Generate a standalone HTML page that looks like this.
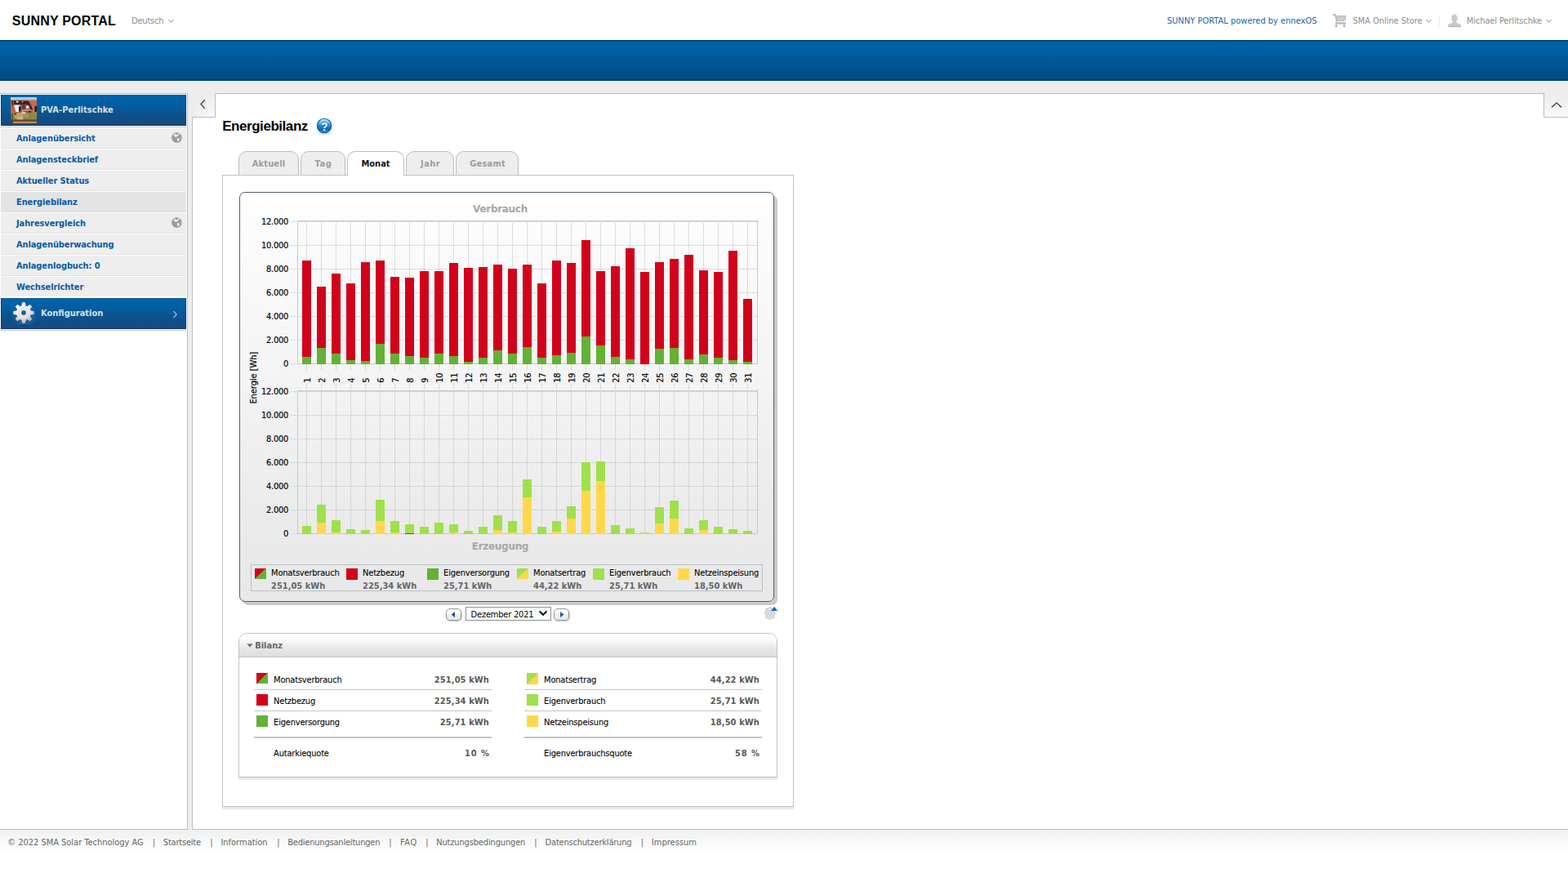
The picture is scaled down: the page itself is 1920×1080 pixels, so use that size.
<!DOCTYPE html>
<html lang="de">
<head>
<meta charset="utf-8">
<title>Sunny Portal - Energiebilanz</title>
<style>
*{box-sizing:border-box;margin:0;padding:0}
html,body{width:1920px;height:1080px;overflow:hidden;background:#fff}
body{position:relative;font-family:"DejaVu Sans Condensed","DejaVu Sans","Liberation Sans",sans-serif;font-size:11px;color:#000}
.abs{position:absolute}
.t{position:absolute;white-space:nowrap;line-height:14px;height:14px}
.b{font-weight:bold}
.geo{font-family:"Liberation Sans",sans-serif;font-weight:bold}
.ver{font-family:"DejaVu Sans","Liberation Sans",sans-serif;font-weight:bold}
a{color:inherit;text-decoration:none}
#hdr{left:0;top:0;width:1920px;height:49px;background:#fff}
#band{left:0;top:49px;width:1920px;height:50px;background:linear-gradient(#00386a 0,#00386a 1px,#0062a7 2px,#005d9f 18px,#00508b 38px,#004b83 48px,#003c70 49px,#003c70 50px)}
#bg{left:0;top:99px;width:1920px;height:917px;background:#ededed}
#side{left:0;top:114px;width:230px;height:902px;background:#fff;border:1px solid #bcbcbc;border-left:0}
#side .hd{left:1px;top:1px;width:227px;height:38px;border:1px solid #0a3d73;border-top-color:#005a9c;background:linear-gradient(#0063a9 0,#005e9f 12px,#0e4f88 26px,#1a4a7c 37px)}
#side .ln{left:1px;width:227px;height:1px}
#side .it{left:1px;width:227px;height:26px;background:#eeeeee;border-top:1px solid #fff;border-bottom:1px solid #e2e2e2}
#side .it.sel{background:#e4e4e4;border-bottom-color:#dcdcdc}
#side .it a{position:absolute;left:19px;top:6px;line-height:14px;font-weight:bold;color:#075aa5;white-space:nowrap;letter-spacing:-.1px}
#side .cfg{left:1px;top:251px;width:227px;height:38px;border:1px solid #0a3d73;border-top-color:#005a9c;background:linear-gradient(#0063a9 0,#005e9f 12px,#0e4f88 26px,#1a4a7c 37px)}
#main{left:235px;top:114px;width:1685px;height:902px;background:#fff}
</style>
</head>
<body>
<div id="hdr" class="abs">
 <span class="t geo" id="logo" style="left:14.8px;top:17px;font-size:16px;line-height:18px;height:18px;letter-spacing:.2px;color:#000">SUNNY PORTAL</span>
 <span class="t" id="lang" style="top:19px;left:161px;color:#8c8c8c;letter-spacing:-.2px">Deutsch</span>
 <svg class="abs" style="left:205px;top:23px" width="9" height="6" viewBox="0 0 9 6"><path d="M1.3 1 L4.5 4.2 L7.7 1" fill="none" stroke="#b0b0b0" stroke-width="1.1"/></svg>
 <a class="t" id="ennex" style="top:19px;left:1429px;color:#1a63a9">SUNNY PORTAL powered by ennexOS</a>
 <svg class="abs" id="cart" style="left:1631px;top:16px" width="19" height="18" viewBox="0 0 19 18"><path d="M1 1.1H4.3L4.9 3H17V7.5L14.7 9.9H6.2L5.6 11.3H17V13.7H4.2L4.4 11.6L5 9.9L3.3 3H1Z" fill="#b9b9b9"/><path d="M5.6 3.9H16.1V7.2L14.3 9H6.6Z" fill="#cccccc"/><circle cx="5.2" cy="15.8" r="1.45" fill="#adadad"/><circle cx="15" cy="15.8" r="1.45" fill="#adadad"/></svg>
 <span class="t" id="store" style="top:19px;left:1656.6px;color:#8c8c8c;letter-spacing:-.06px">SMA Online Store</span>
 <svg class="abs" style="left:1745px;top:23px" width="9" height="6" viewBox="0 0 9 6"><path d="M1.3 1 L4.5 4.2 L7.7 1" fill="none" stroke="#b0b0b0" stroke-width="1.1"/></svg>
 <div class="abs" style="left:1762px;top:20px;width:1px;height:11px;background:repeating-linear-gradient(#d9d9d9 0,#d9d9d9 1px,transparent 1px,transparent 2px)"></div>
 <svg class="abs" id="user" style="left:1772px;top:17px" width="18" height="17" viewBox="0 0 18 17"><path d="M9 1.1 C11.2 1.1 12.2 2.4 12.2 4.4 L12.4 5.6 C12.4 7.2 11.8 8.6 10.9 9.4 L10.9 10.6 C11.6 11.4 13 11.9 14.6 12.3 C16 12.7 16.8 13.4 16.8 14.6 L16.8 16 L1.2 16 L1.2 14.6 C1.2 13.4 2 12.7 3.4 12.3 C5 11.9 6.4 11.4 7.1 10.6 L7.1 9.4 C6.2 8.6 5.6 7.2 5.6 5.6 L5.8 4.4 C5.8 2.4 6.8 1.1 9 1.1 Z" fill="#c9c9c9" stroke="#bdbdbd" stroke-width=".5"/><rect x="1.3" y="15.1" width="15.4" height=".9" fill="#b5b5b5"/></svg>
 <span class="t" id="usern" style="top:19px;left:1795.8px;color:#8c8c8c;letter-spacing:-.12px">Michael Perlitschke</span>
 <svg class="abs" style="left:1892px;top:23px" width="9" height="6" viewBox="0 0 9 6"><path d="M1.3 1 L4.5 4.2 L7.7 1" fill="none" stroke="#b0b0b0" stroke-width="1.1"/></svg>
</div>
<div id="band" class="abs"></div>
<div id="bg" class="abs"></div>
<div id="side" class="abs">
 <div class="abs hd">
  <svg class="abs" id="thumb" style="left:11px;top:2px" width="32" height="32" viewBox="0 0 32 32">
   <defs><filter id="bl" x="-20%" y="-20%" width="140%" height="140%"><feGaussianBlur stdDeviation="0.5"/></filter><clipPath id="tc"><rect width="32" height="32"/></clipPath></defs>
   <g clip-path="url(#tc)"><g filter="url(#bl)">
    <rect x="-4" y="-4" width="40" height="40" fill="#b85e46"/>
    <rect x="-4" y="-4" width="40" height="7.2" fill="#9fd0f3"/>
    <rect x="-4" y="-4" width="7" height="6" fill="#b4d6ee"/>
    <rect x="-4" y="3" width="40" height="1.5" fill="#b39a95"/>
    <polygon points="22,4.5 36,4.5 36,11 27,11" fill="#c9684a"/>
    <polygon points="25,11 36,11 36,20 28,20" fill="#cb7363"/>
    <polygon points="-4,4 3.5,4 4,18 -4,18" fill="#c6613c"/>
    <polygon points="1,4 2.6,4 3.2,10.5 1.8,10.5" fill="#57231f"/>
    <polygon points="3.6,4 22,4.5 27.4,15 24,15 21,9.2 4,9.4" fill="#3a2427"/>
    <rect x="6.8" y="4.6" width="2.6" height="2" fill="#f4ecec"/>
    <rect x="13.6" y="4.9" width="2" height="1.2" fill="#d2aaa2"/>
    <rect x="13.4" y="6.4" width="2.8" height="3.2" fill="#293048"/>
    <polygon points="4,9.5 12,9.5 13,18 6.4,18" fill="#ece9e1"/>
    <ellipse cx="11.4" cy="14.6" rx="1.5" ry="4" fill="#2a1c2c"/>
    <polygon points="13,10 21,9.6 25,16 14,17" fill="#b25c4a"/>
    <rect x="14" y="10" width="4" height="4.6" fill="#6b3029"/>
    <rect x="19" y="10.6" width="3.6" height="3" fill="#f7f1ef"/>
    <rect x="14" y="15" width="11" height="2.6" fill="#c98b79"/>
    <rect x="16.6" y="17" width="7.6" height="2" fill="#6c5c52"/>
    <rect x="22" y="16.8" width="2.6" height="2.4" fill="#2a1614"/>
    <rect x="29.4" y="11" width="4" height="7" fill="#2a1a18"/>
    <rect x="-4" y="18.6" width="40" height="12" fill="#8b8548"/>
    <rect x="-4" y="20" width="7" height="10" fill="#5c6b3a"/>
    <ellipse cx="10.5" cy="23.5" rx="5.8" ry="4.4" fill="#b9a568"/>
    <ellipse cx="12" cy="26" rx="3.4" ry="2" fill="#cdb884"/>
    <ellipse cx="18.5" cy="22.4" rx="3.6" ry="2.6" fill="#b38b69"/>
    <ellipse cx="16" cy="19.2" rx="3" ry="1" fill="#e6dccc"/>
    <ellipse cx="26.4" cy="24.6" rx="4" ry="4.6" fill="#878a41"/>
    <rect x="30.4" y="19.6" width="4" height="6" fill="#c07a52"/>
    <rect x="5" y="19.6" width="2" height="2" fill="#4b4121"/>
    <rect x="-4" y="27.4" width="40" height="2.6" fill="#5e4c32"/>
    <rect x="-4" y="29.8" width="40" height="6" fill="#c6875e"/>
    <rect x="-4" y="28" width="7" height="8" fill="#5b3540"/>
   </g></g>
  </svg>
  <span class="t b" id="pva" style="left:48px;top:11px;color:#d6e1ec;letter-spacing:.05px">PVA-Perlitschke</span>
 </div>
 <div class="abs ln" style="top:40px;background:#c9c6c2"></div>
 <div class="abs it" style="top:41px"><a>Anlagenübersicht</a><svg class="abs globe" style="left:209px;top:5px" width="13" height="13" viewBox="0 0 13 13"><circle cx="6.5" cy="6.5" r="6.3" fill="#9a9a9a"/><path d="M2.6 2.9 C3.4 2.1 4.4 1.9 5.2 2.3 L5.6 3 L7.6 3 L8 2.2 L8.2 1.3 L9.4 1.6 L10.2 2.8 L8.6 3.2 L6.8 5.2 L5 6 L3.6 5 Z M6.9 7.2 L8.4 6.9 L10.1 8.6 L9 10.2 L7.6 11.6 L7 10 Z M11.1 5.8 L11.9 6.1 L11.8 7.4 L11.1 7 Z" fill="#f2f2f2"/></svg></div>
 <div class="abs it" style="top:67px"><a>Anlagensteckbrief</a></div>
 <div class="abs it" style="top:93px"><a>Aktueller Status</a></div>
 <div class="abs it sel" style="top:119px"><a>Energiebilanz</a></div>
 <div class="abs it" style="top:145px"><a>Jahresvergleich</a><svg class="abs globe" style="left:209px;top:5px" width="13" height="13" viewBox="0 0 13 13"><circle cx="6.5" cy="6.5" r="6.3" fill="#9a9a9a"/><path d="M2.6 2.9 C3.4 2.1 4.4 1.9 5.2 2.3 L5.6 3 L7.6 3 L8 2.2 L8.2 1.3 L9.4 1.6 L10.2 2.8 L8.6 3.2 L6.8 5.2 L5 6 L3.6 5 Z M6.9 7.2 L8.4 6.9 L10.1 8.6 L9 10.2 L7.6 11.6 L7 10 Z M11.1 5.8 L11.9 6.1 L11.8 7.4 L11.1 7 Z" fill="#f2f2f2"/></svg></div>
 <div class="abs it" style="top:171px"><a>Anlagenüberwachung</a></div>
 <div class="abs it" style="top:197px"><a>Anlagenlogbuch: 0</a></div>
 <div class="abs it" style="top:223px;border-bottom-color:#fff"><a>Wechselrichter</a></div>
 <div class="abs cfg" style="top:250px">
  <svg class="abs" id="gear" style="left:10px;top:0px" width="34" height="36" viewBox="-17 -17 34 36">
   <defs><radialGradient id="gg" gradientUnits="userSpaceOnUse" cx="-2" cy="-4" r="16"><stop offset="0" stop-color="#ffffff"/><stop offset="0.55" stop-color="#ededed"/><stop offset="1" stop-color="#bdbdbd"/></radialGradient><radialGradient id="gl"><stop offset="0" stop-color="#5f93cc" stop-opacity=".5"/><stop offset=".6" stop-color="#4f86c2" stop-opacity=".3"/><stop offset="1" stop-color="#4f86c2" stop-opacity="0"/></radialGradient><filter id="gb" x="-50%" y="-200%" width="200%" height="500%"><feGaussianBlur stdDeviation=".6"/></filter></defs>
   <ellipse cx="1" cy="3" rx="16" ry="15" fill="url(#gl)"/>
   <ellipse cx="0" cy="15.7" rx="5.6" ry=".7" fill="#0a2a52" opacity=".6" filter="url(#gb)"/>
   <path d="M-2.23 -8.31 L-1.40 -12.32 L1.40 -12.32 L2.23 -8.31ZM4.30 -7.45 L7.72 -9.70 L9.70 -7.72 L7.45 -4.30ZM8.31 -2.23 L12.32 -1.40 L12.32 1.40 L8.31 2.23ZM7.45 4.30 L9.70 7.72 L7.72 9.70 L4.30 7.45ZM2.23 8.31 L1.40 12.32 L-1.40 12.32 L-2.23 8.31ZM-4.30 7.45 L-7.72 9.70 L-9.70 7.72 L-7.45 4.30ZM-8.31 2.23 L-12.32 1.40 L-12.32 -1.40 L-8.31 -2.23ZM-7.45 -4.30 L-9.70 -7.72 L-7.72 -9.70 L-4.30 -7.45Z" fill="url(#gg)" stroke="url(#gg)" stroke-width="1" stroke-linejoin="round"/>
   <circle r="9.1" fill="url(#gg)"/>
   <circle r="6.6" fill="none" stroke="#dcdcdc" stroke-width=".8"/><circle r="5" fill="none" stroke="#e2e2e2" stroke-width="1.2"/>
   <circle r="3.45" fill="#1a5e9c" stroke="#f6f6f6" stroke-width=".9"/>
  </svg>
  <span class="t b" id="konf" style="left:48px;top:11px;color:#d6e1ec">Konfiguration</span>
  <svg class="abs" style="left:209px;top:14px" width="7" height="10" viewBox="0 0 7 10"><path d="M1.5 1 L5.2 5 L1.5 9" fill="none" stroke="#9cbfe2" stroke-width="1.2"/></svg>
 </div>
 <div class="abs ln" style="top:289px;background:#c9c6c2"></div>
</div>
<div id="main" class="abs" style="border:1px solid #bcbcbc;border-right:0"></div>
<div class="abs" id="notchL" style="left:235px;top:114px;width:29px;height:30px;border-right:1px solid #bcbcbc;border-bottom:1px solid #bcbcbc;background:radial-gradient(circle at 100% 100%,#fcfcfc 0,#f3f3f3 35%,#ededed 70%)">
 <svg class="abs" style="left:9px;top:7.3px" width="9" height="13" viewBox="0 0 9 13"><path d="M6.8 1 L2 6.5 L6.8 12" fill="none" stroke="#555" stroke-width="1.5"/></svg>
</div>
<div class="abs" id="notchR" style="left:1890px;top:114px;width:30px;height:30px;border-left:1px solid #bcbcbc;border-bottom:1px solid #bcbcbc;background:linear-gradient(#ededed 0,#efefef 35%,#f5f5f5 70%,#fbfbfb 100%)">
 <svg class="abs" style="left:8px;top:10px" width="14" height="9" viewBox="0 0 14 9"><path d="M1 7.4 L7 2 L13 7.4" fill="none" stroke="#555" stroke-width="1.6"/></svg>
</div>
<h1 class="t geo" id="title" style="left:272.2px;top:145px;font-size:17px;line-height:20px;height:20px;letter-spacing:-.45px">Energiebilanz</h1>
<svg class="abs" id="help" style="left:386px;top:143px" width="22" height="23" viewBox="-11 -11 22 23">
 <defs><linearGradient id="hg" x1="0" y1="0" x2="0" y2="1"><stop offset="0" stop-color="#c4ecfc"/><stop offset=".22" stop-color="#74c2ee"/><stop offset=".5" stop-color="#1784d2"/><stop offset=".82" stop-color="#0769bf"/><stop offset="1" stop-color="#4b98dc"/></linearGradient><filter id="hb" x="-30%" y="-30%" width="160%" height="160%"><feGaussianBlur stdDeviation=".8"/></filter></defs>
 <ellipse cx=".2" cy="8.2" rx="8" ry="2.6" fill="#7d8794" opacity=".35" filter="url(#hb)"/>
 <circle cx=".1" cy="-.05" r="9.3" fill="#0f5db1"/>
 <circle cx=".1" cy="-.05" r="8.1" fill="url(#hg)"/>
 <text x=".3" y="5.75" text-anchor="middle" font-family="Liberation Sans, sans-serif" font-weight="bold" font-size="15.4" fill="#3a4a5c" opacity=".7" transform="translate(0 -.7) scale(.86 1)">?</text>
 <text x=".3" y="5.75" text-anchor="middle" font-family="Liberation Sans, sans-serif" font-weight="bold" font-size="15.4" fill="#fff" transform="scale(.86 1)">?</text>
</svg>
<div class="abs tab" style="left:292px;width:74px"><span style="letter-spacing:.12px">Aktuell</span></div>
<div class="abs tab" style="left:368px;width:55px"><span style="letter-spacing:.6px;margin-left:1px">Tag</span></div>
<div class="abs tab" style="left:497px;width:59px"><span style="letter-spacing:.4px;margin-left:1px">Jahr</span></div>
<div class="abs tab" style="left:558px;width:77px"><span style="letter-spacing:.2px;margin-left:1px">Gesamt</span></div>
<div id="panel" class="abs"></div>
<div class="abs tab act" style="left:425px;width:70px"><span>Monat</span></div>
<style>
.tab{top:185px;height:30px;border:1px solid #bcbcbc;border-radius:10px 10px 0 0;background:#eeeeee;text-align:center;font-weight:bold;color:#9c9c9c}
.tab span{display:block;margin-top:8px;line-height:14px}
.tab.act{background:#fff;border-bottom:0;color:#111}
#panel{left:272px;top:214px;width:700px;height:774px;border:1px solid #c2c2c2;background:#fff;box-shadow:0 3px 0 #e9e9e9}
</style>
<div id="chart" class="abs" style="left:293px;top:235px;width:655px;height:502px;border:1px solid #525f6b;border-radius:7px;background:linear-gradient(#ffffff 0,#fbfbfb 12%,#f4f4f4 45%,#ebebeb 78%,#e8e8e8 100%);box-shadow:4px 4px 0 #cacaca"></div>
<svg class="abs" id="plot" style="left:293px;top:235px" width="655" height="502" viewBox="293 235 655 502" font-family="DejaVu Sans Condensed, DejaVu Sans, Liberation Sans, sans-serif" font-size="11">
<text x="612.5" y="259.6" text-anchor="middle" font-family="DejaVu Sans, Liberation Sans, sans-serif" font-weight="bold" font-size="12" fill="#a6a6a6" letter-spacing="-.3">Verbrauch</text>
<text x="612.5" y="672.6" text-anchor="middle" font-family="DejaVu Sans, Liberation Sans, sans-serif" font-weight="bold" font-size="12" fill="#a6a6a6" letter-spacing="-.3">Erzeugung</text>
<g shape-rendering="crispEdges" fill="none"><path d="M356 271.5H364" stroke="#bac0c5" stroke-dasharray="1 1"/><path d="M356 300.5H364" stroke="#bac0c5" stroke-dasharray="1 1"/><path d="M366 300.5H927" stroke="#bac0c5" stroke-dasharray="1 1"/><path d="M356 329.5H364" stroke="#bac0c5" stroke-dasharray="1 1"/><path d="M366 329.5H927" stroke="#bac0c5" stroke-dasharray="1 1"/><path d="M356 358.5H364" stroke="#bac0c5" stroke-dasharray="1 1"/><path d="M366 358.5H927" stroke="#bac0c5" stroke-dasharray="1 1"/><path d="M356 387.5H364" stroke="#bac0c5" stroke-dasharray="1 1"/><path d="M366 387.5H927" stroke="#bac0c5" stroke-dasharray="1 1"/><path d="M356 416.5H364" stroke="#bac0c5" stroke-dasharray="1 1"/><path d="M366 416.5H927" stroke="#bac0c5" stroke-dasharray="1 1"/><path d="M356 445.5H364" stroke="#bac0c5" stroke-dasharray="1 1"/><path d="M375.5 273V445M393.5 273V445M411.5 273V445M429.5 273V445M447.5 273V445M465.5 273V445M483.5 273V445M501.5 273V445M519.5 273V445M537.5 273V445M555.5 273V445M573.5 273V445M591.5 273V445M609.5 273V445M627.5 273V445M645.5 273V445M663.5 273V445M681.5 273V445M699.5 273V445M717.5 273V445M735.5 273V445M753.5 273V445M771.5 273V445M789.5 273V445M807.5 273V445M825.5 273V445M843.5 273V445M861.5 273V445M879.5 273V445M897.5 273V445M915.5 273V445" stroke="#bac0c5" stroke-dasharray="1 1"/><path d="M375.5 446V454M393.5 446V454M411.5 446V454M429.5 446V454M447.5 446V454M465.5 446V454M483.5 446V454M501.5 446V454M519.5 446V454M537.5 446V454M555.5 446V454M573.5 446V454M591.5 446V454M609.5 446V454M627.5 446V454M645.5 446V454M663.5 446V454M681.5 446V454M699.5 446V454M717.5 446V454M735.5 446V454M753.5 446V454M771.5 446V454M789.5 446V454M807.5 446V454M825.5 446V454M843.5 446V454M861.5 446V454M879.5 446V454M897.5 446V454M915.5 446V454" stroke="#bac0c5" stroke-dasharray="1 1"/><path d="M366 271.5H927" stroke="#bac0c5" stroke-dasharray="1 1"/><rect x="364.5" y="270.5" width="563" height="175" fill="none" stroke="#c2c9d0"/></g>
<g shape-rendering="crispEdges" fill="none"><path d="M356 479.5H364" stroke="#bac0c5" stroke-dasharray="1 1"/><path d="M356 508.5H364" stroke="#bac0c5" stroke-dasharray="1 1"/><path d="M366 508.5H927" stroke="#bac0c5" stroke-dasharray="1 1"/><path d="M356 537.5H364" stroke="#bac0c5" stroke-dasharray="1 1"/><path d="M366 537.5H927" stroke="#bac0c5" stroke-dasharray="1 1"/><path d="M356 566.5H364" stroke="#bac0c5" stroke-dasharray="1 1"/><path d="M366 566.5H927" stroke="#bac0c5" stroke-dasharray="1 1"/><path d="M356 595.5H364" stroke="#bac0c5" stroke-dasharray="1 1"/><path d="M366 595.5H927" stroke="#bac0c5" stroke-dasharray="1 1"/><path d="M356 624.5H364" stroke="#bac0c5" stroke-dasharray="1 1"/><path d="M366 624.5H927" stroke="#bac0c5" stroke-dasharray="1 1"/><path d="M356 653.5H364" stroke="#bac0c5" stroke-dasharray="1 1"/><path d="M375.5 481V653M393.5 481V653M411.5 481V653M429.5 481V653M447.5 481V653M465.5 481V653M483.5 481V653M501.5 481V653M519.5 481V653M537.5 481V653M555.5 481V653M573.5 481V653M591.5 481V653M609.5 481V653M627.5 481V653M645.5 481V653M663.5 481V653M681.5 481V653M699.5 481V653M717.5 481V653M735.5 481V653M753.5 481V653M771.5 481V653M789.5 481V653M807.5 481V653M825.5 481V653M843.5 481V653M861.5 481V653M879.5 481V653M897.5 481V653M915.5 481V653" stroke="#bac0c5" stroke-dasharray="1 1"/><path d="M375.5 470V479M393.5 470V479M411.5 470V479M429.5 470V479M447.5 470V479M465.5 470V479M483.5 470V479M501.5 470V479M519.5 470V479M537.5 470V479M555.5 470V479M573.5 470V479M591.5 470V479M609.5 470V479M627.5 470V479M645.5 470V479M663.5 470V479M681.5 470V479M699.5 470V479M717.5 470V479M735.5 470V479M753.5 470V479M771.5 470V479M789.5 470V479M807.5 470V479M825.5 470V479M843.5 470V479M861.5 470V479M879.5 470V479M897.5 470V479M915.5 470V479" stroke="#bac0c5" stroke-dasharray="1 1"/><path d="M366 479.5H927" stroke="#bac0c5" stroke-dasharray="1 1"/><rect x="364.5" y="478.5" width="563" height="175" fill="none" stroke="#c2c9d0"/></g>
<g shape-rendering="crispEdges"><rect x="370" y="319" width="11" height="118" fill="#d1021b"/><rect x="370" y="437" width="11" height="9" fill="#63b135"/><rect x="370" y="644" width="11" height="10" fill="#a0e04b"/><rect x="388" y="351" width="11" height="75" fill="#d1021b"/><rect x="388" y="426" width="11" height="20" fill="#63b135"/><rect x="388" y="618" width="11" height="22" fill="#a0e04b"/><rect x="388" y="640" width="11" height="14" fill="#fed84a"/><rect x="406" y="335" width="11" height="98" fill="#d1021b"/><rect x="406" y="433" width="11" height="13" fill="#63b135"/><rect x="406" y="637" width="11" height="15" fill="#a0e04b"/><rect x="406" y="652" width="11" height="2" fill="#fed84a"/><rect x="424" y="347" width="11" height="94" fill="#d1021b"/><rect x="424" y="441" width="11" height="5" fill="#63b135"/><rect x="424" y="648" width="11" height="6" fill="#a0e04b"/><rect x="442" y="321" width="11" height="121" fill="#d1021b"/><rect x="442" y="442" width="11" height="4" fill="#63b135"/><rect x="442" y="649" width="11" height="5" fill="#a0e04b"/><rect x="460" y="319" width="11" height="102" fill="#d1021b"/><rect x="460" y="421" width="11" height="25" fill="#63b135"/><rect x="460" y="612" width="11" height="26" fill="#a0e04b"/><rect x="460" y="638" width="11" height="16" fill="#fed84a"/><rect x="478" y="339" width="11" height="94" fill="#d1021b"/><rect x="478" y="433" width="11" height="13" fill="#63b135"/><rect x="478" y="638" width="11" height="14" fill="#a0e04b"/><rect x="478" y="652" width="11" height="2" fill="#fed84a"/><rect x="496" y="340" width="11" height="96" fill="#d1021b"/><rect x="496" y="436" width="11" height="10" fill="#63b135"/><rect x="496" y="642" width="11" height="12" fill="#a0e04b"/><rect x="514" y="332" width="11" height="106" fill="#d1021b"/><rect x="514" y="438" width="11" height="8" fill="#63b135"/><rect x="514" y="645" width="11" height="9" fill="#a0e04b"/><rect x="532" y="332" width="11" height="101" fill="#d1021b"/><rect x="532" y="433" width="11" height="13" fill="#63b135"/><rect x="532" y="640" width="11" height="14" fill="#a0e04b"/><rect x="550" y="322" width="11" height="114" fill="#d1021b"/><rect x="550" y="436" width="11" height="10" fill="#63b135"/><rect x="550" y="642" width="11" height="10" fill="#a0e04b"/><rect x="550" y="652" width="11" height="2" fill="#fed84a"/><rect x="568" y="328" width="11" height="115" fill="#d1021b"/><rect x="568" y="443" width="11" height="3" fill="#63b135"/><rect x="568" y="650" width="11" height="4" fill="#a0e04b"/><rect x="586" y="327" width="11" height="111" fill="#d1021b"/><rect x="586" y="438" width="11" height="8" fill="#63b135"/><rect x="586" y="645" width="11" height="9" fill="#a0e04b"/><rect x="604" y="324" width="11" height="105" fill="#d1021b"/><rect x="604" y="429" width="11" height="17" fill="#63b135"/><rect x="604" y="631" width="11" height="18" fill="#a0e04b"/><rect x="604" y="649" width="11" height="5" fill="#fed84a"/><rect x="622" y="329" width="11" height="104" fill="#d1021b"/><rect x="622" y="433" width="11" height="13" fill="#63b135"/><rect x="622" y="638" width="11" height="14" fill="#a0e04b"/><rect x="622" y="652" width="11" height="2" fill="#fed84a"/><rect x="640" y="324" width="11" height="101" fill="#d1021b"/><rect x="640" y="425" width="11" height="21" fill="#63b135"/><rect x="640" y="587" width="11" height="22" fill="#a0e04b"/><rect x="640" y="609" width="11" height="45" fill="#fed84a"/><rect x="658" y="347" width="11" height="91" fill="#d1021b"/><rect x="658" y="438" width="11" height="8" fill="#63b135"/><rect x="658" y="645" width="11" height="9" fill="#a0e04b"/><rect x="676" y="319" width="11" height="116" fill="#d1021b"/><rect x="676" y="435" width="11" height="11" fill="#63b135"/><rect x="676" y="638" width="11" height="13" fill="#a0e04b"/><rect x="676" y="651" width="11" height="3" fill="#fed84a"/><rect x="694" y="322" width="11" height="110" fill="#d1021b"/><rect x="694" y="432" width="11" height="14" fill="#63b135"/><rect x="694" y="620" width="11" height="15" fill="#a0e04b"/><rect x="694" y="635" width="11" height="19" fill="#fed84a"/><rect x="712" y="294" width="11" height="118" fill="#d1021b"/><rect x="712" y="412" width="11" height="34" fill="#63b135"/><rect x="712" y="566" width="11" height="35" fill="#a0e04b"/><rect x="712" y="601" width="11" height="53" fill="#fed84a"/><rect x="730" y="332" width="11" height="91" fill="#d1021b"/><rect x="730" y="423" width="11" height="23" fill="#63b135"/><rect x="730" y="565" width="11" height="24" fill="#a0e04b"/><rect x="730" y="589" width="11" height="65" fill="#fed84a"/><rect x="748" y="326" width="11" height="111" fill="#d1021b"/><rect x="748" y="437" width="11" height="9" fill="#63b135"/><rect x="748" y="643" width="11" height="11" fill="#a0e04b"/><rect x="766" y="304" width="11" height="136" fill="#d1021b"/><rect x="766" y="440" width="11" height="6" fill="#63b135"/><rect x="766" y="647" width="11" height="7" fill="#a0e04b"/><rect x="784" y="333" width="11" height="113" fill="#d1021b"/><rect x="784" y="652" width="11" height="1" fill="#a0e04b"/><rect x="784" y="653" width="11" height="1" fill="#fed84a"/><rect x="802" y="321" width="11" height="106" fill="#d1021b"/><rect x="802" y="427" width="11" height="19" fill="#63b135"/><rect x="802" y="621" width="11" height="20" fill="#a0e04b"/><rect x="802" y="641" width="11" height="13" fill="#fed84a"/><rect x="820" y="317" width="11" height="109" fill="#d1021b"/><rect x="820" y="426" width="11" height="20" fill="#63b135"/><rect x="820" y="613" width="11" height="22" fill="#a0e04b"/><rect x="820" y="635" width="11" height="19" fill="#fed84a"/><rect x="838" y="312" width="11" height="128" fill="#d1021b"/><rect x="838" y="440" width="11" height="6" fill="#63b135"/><rect x="838" y="647" width="11" height="7" fill="#a0e04b"/><rect x="856" y="331" width="11" height="103" fill="#d1021b"/><rect x="856" y="434" width="11" height="12" fill="#63b135"/><rect x="856" y="637" width="11" height="12" fill="#a0e04b"/><rect x="856" y="649" width="11" height="5" fill="#fed84a"/><rect x="874" y="333" width="11" height="105" fill="#d1021b"/><rect x="874" y="438" width="11" height="8" fill="#63b135"/><rect x="874" y="645" width="11" height="9" fill="#a0e04b"/><rect x="892" y="307" width="11" height="134" fill="#d1021b"/><rect x="892" y="441" width="11" height="5" fill="#63b135"/><rect x="892" y="648" width="11" height="6" fill="#a0e04b"/><rect x="910" y="366" width="11" height="77" fill="#d1021b"/><rect x="910" y="443" width="11" height="3" fill="#63b135"/><rect x="910" y="650" width="11" height="4" fill="#a0e04b"/><rect x="496" y="653" width="11" height="1" fill="#555"/></g>
<g fill="#000" stroke="#000" stroke-width=".16"><text x="353.1" y="274.6" text-anchor="end" letter-spacing="-.25">12.000</text><text x="353.1" y="303.6" text-anchor="end" letter-spacing="-.25">10.000</text><text x="353.1" y="332.6" text-anchor="end" letter-spacing="-.25">8.000</text><text x="353.1" y="361.6" text-anchor="end" letter-spacing="-.25">6.000</text><text x="353.1" y="390.6" text-anchor="end" letter-spacing="-.25">4.000</text><text x="353.1" y="419.6" text-anchor="end" letter-spacing="-.25">2.000</text><text x="353.1" y="448.6" text-anchor="end" letter-spacing="-.25">0</text><text x="353.1" y="482.6" text-anchor="end" letter-spacing="-.25">12.000</text><text x="353.1" y="511.6" text-anchor="end" letter-spacing="-.25">10.000</text><text x="353.1" y="540.6" text-anchor="end" letter-spacing="-.25">8.000</text><text x="353.1" y="569.6" text-anchor="end" letter-spacing="-.25">6.000</text><text x="353.1" y="598.6" text-anchor="end" letter-spacing="-.25">4.000</text><text x="353.1" y="627.6" text-anchor="end" letter-spacing="-.25">2.000</text><text x="353.1" y="656.6" text-anchor="end" letter-spacing="-.25">0</text><text transform="translate(380.1 468.8) rotate(-90)" letter-spacing="-.25">1</text><text transform="translate(398.1 468.8) rotate(-90)" letter-spacing="-.25">2</text><text transform="translate(416.1 468.8) rotate(-90)" letter-spacing="-.25">3</text><text transform="translate(434.1 468.8) rotate(-90)" letter-spacing="-.25">4</text><text transform="translate(452.1 468.8) rotate(-90)" letter-spacing="-.25">5</text><text transform="translate(470.1 468.8) rotate(-90)" letter-spacing="-.25">6</text><text transform="translate(488.1 468.8) rotate(-90)" letter-spacing="-.25">7</text><text transform="translate(506.1 468.8) rotate(-90)" letter-spacing="-.25">8</text><text transform="translate(524.1 468.8) rotate(-90)" letter-spacing="-.25">9</text><text transform="translate(542.1 468.8) rotate(-90)" letter-spacing="-.25">10</text><text transform="translate(560.1 468.8) rotate(-90)" letter-spacing="-.25">11</text><text transform="translate(578.1 468.8) rotate(-90)" letter-spacing="-.25">12</text><text transform="translate(596.1 468.8) rotate(-90)" letter-spacing="-.25">13</text><text transform="translate(614.1 468.8) rotate(-90)" letter-spacing="-.25">14</text><text transform="translate(632.1 468.8) rotate(-90)" letter-spacing="-.25">15</text><text transform="translate(650.1 468.8) rotate(-90)" letter-spacing="-.25">16</text><text transform="translate(668.1 468.8) rotate(-90)" letter-spacing="-.25">17</text><text transform="translate(686.1 468.8) rotate(-90)" letter-spacing="-.25">18</text><text transform="translate(704.1 468.8) rotate(-90)" letter-spacing="-.25">19</text><text transform="translate(722.1 468.8) rotate(-90)" letter-spacing="-.25">20</text><text transform="translate(740.1 468.8) rotate(-90)" letter-spacing="-.25">21</text><text transform="translate(758.1 468.8) rotate(-90)" letter-spacing="-.25">22</text><text transform="translate(776.1 468.8) rotate(-90)" letter-spacing="-.25">23</text><text transform="translate(794.1 468.8) rotate(-90)" letter-spacing="-.25">24</text><text transform="translate(812.1 468.8) rotate(-90)" letter-spacing="-.25">25</text><text transform="translate(830.1 468.8) rotate(-90)" letter-spacing="-.25">26</text><text transform="translate(848.1 468.8) rotate(-90)" letter-spacing="-.25">27</text><text transform="translate(866.1 468.8) rotate(-90)" letter-spacing="-.25">28</text><text transform="translate(884.1 468.8) rotate(-90)" letter-spacing="-.25">29</text><text transform="translate(902.1 468.8) rotate(-90)" letter-spacing="-.25">30</text><text transform="translate(920.1 468.8) rotate(-90)" letter-spacing="-.25">31</text><text transform="translate(314.3 494.6) rotate(-90)" letter-spacing="-.05">Energie [Wh]</text></g>
<rect x="307.5" y="691.5" width="626" height="32" fill="none" stroke="#b9c0c8" shape-rendering="crispEdges"/>
<path d="M312 696h14l-14 13z" fill="#d1021b"/><path d="M326 696v13h-14z" fill="#63b135"/>
<text x="332.1" y="705.3" fill="#000" stroke="#000" stroke-width=".08" letter-spacing="-.2">Monatsverbrauch</text>
<text x="332" y="721" fill="#666" font-weight="bold">251,05 kWh</text>
<rect x="424" y="696" width="14" height="14" fill="#d1021b"/>
<text x="444.1" y="705.3" fill="#000" stroke="#000" stroke-width=".08" letter-spacing="-.2">Netzbezug</text>
<text x="444" y="721" fill="#666" font-weight="bold">225,34 kWh</text>
<rect x="523" y="696" width="14" height="14" fill="#63b135"/>
<text x="543.1" y="705.3" fill="#000" stroke="#000" stroke-width=".08" letter-spacing="-.2">Eigenversorgung</text>
<text x="543" y="721" fill="#666" font-weight="bold">25,71 kWh</text>
<path d="M633 696h14l-14 13z" fill="#a0e04b"/><path d="M647 696v13h-14z" fill="#fed84a"/>
<text x="653.1" y="705.3" fill="#000" stroke="#000" stroke-width=".08" letter-spacing="-.2">Monatsertrag</text>
<text x="653" y="721" fill="#666" font-weight="bold">44,22 kWh</text>
<rect x="726" y="696" width="14" height="14" fill="#a0e04b"/>
<text x="746.1" y="705.3" fill="#000" stroke="#000" stroke-width=".08" letter-spacing="-.2">Eigenverbrauch</text>
<text x="746" y="721" fill="#666" font-weight="bold">25,71 kWh</text>
<rect x="830" y="696" width="14" height="14" fill="#fed84a"/>
<text x="850.1" y="705.3" fill="#000" stroke="#000" stroke-width=".08" letter-spacing="-.2">Netzeinspeisung</text>
<text x="850" y="721" fill="#666" font-weight="bold">18,50 kWh</text>
</svg>
<style>
.nb{top:745px;width:19px;height:15px;border:1px solid #969696;border-radius:5px;background:linear-gradient(#fff 0,#fdfdfd 38%,#ececec 56%,#e9e9e9 100%);box-shadow:.5px 1px 1px rgba(0,0,0,.22)}
#sel{left:570px;top:743px;width:105px;height:17px;border:1px solid #8e8e8e;background:#fff}
#bil{left:292px;top:775px;width:660px;height:177px;border:1px solid #c3c3c3;border-radius:10px 10px 0 0;background:#fff;box-shadow:0 3px 0 #e9e9e9;overflow:hidden}
#bil .bh{left:0;top:0;width:658px;height:29px;border-bottom:1px solid #c3c3c3;background:linear-gradient(#ffffff 0,#fbfbfb 25%,#e8e8e8 62%,#dddddd 100%)}
.row{position:absolute;height:26px;width:291px;border-bottom:1px solid #c6c6c6}
.row .sw{position:absolute;left:3px;top:5px;width:14px;height:14px}
.row .l{position:absolute;left:24.1px;top:7px;line-height:14px;white-space:nowrap;color:#000;letter-spacing:-.2px;-webkit-text-stroke:.08px #000}
.row .v{position:absolute;right:3px;top:7px;line-height:14px;white-space:nowrap;font-weight:bold;color:#585858;letter-spacing:.1px}
#foot{left:0;top:1016px;width:1920px;height:64px;background:linear-gradient(#efefef 0,#f6f6f6 10px,#fdfdfd 24px,#fff 32px)}
#foot span{position:absolute;top:9px;line-height:14px;white-space:nowrap;color:#666;letter-spacing:-.2px}
</style>
<div class="abs nb" style="left:546px"><svg class="abs" style="left:4px;top:2px" width="8" height="9" viewBox="0 0 8 9"><path d="M6 .9V8.1L1.6 4.5Z" fill="#0b57a8"/></svg></div>
<div class="abs" id="sel"><span class="t" style="left:5.6px;top:2px;letter-spacing:-.2px">Dezember 2021</span><svg class="abs" style="left:88px;top:3px" width="12" height="8" viewBox="0 0 12 8"><path d="M1.6 1.4L6 5.8L10.4 1.4" fill="none" stroke="#0a0a0a" stroke-width="2"/></svg></div>
<div class="abs nb" style="left:678px"><svg class="abs" style="left:5px;top:2px" width="8" height="9" viewBox="0 0 8 9"><path d="M2 .9V8.1L6.4 4.5Z" fill="#0b57a8"/></svg></div>
<svg class="abs" id="sgear" style="left:933px;top:741px" width="22" height="21" viewBox="-9.8 -10.1 22 21"><path d="M0.00 -7.90 L1.99 -5.84 L4.60 -5.59 L4.80 -2.42 L6.50 0.00 L4.80 2.42 L4.60 5.59 L1.99 5.84 L0.00 7.90 L-1.99 5.84 L-4.60 5.59 L-4.80 2.42 L-6.50 0.00 L-4.80 -2.42 L-4.60 -5.59 L-1.99 -5.84Z" fill="#e6e6e6" stroke="#b2b2b2" stroke-width=".9" stroke-linejoin="round"/><circle r="3.9" fill="none" stroke="#cdcdcd" stroke-width=".8"/><circle r="1.9" fill="#f8f8f8" stroke="#b4b4b4" stroke-width=".9"/><path d="M1.3 -3H9.4L5.35 -8.3Z" fill="#0b6dcd"/></svg>
<div class="abs" id="bil"><div class="abs bh"><svg class="abs" style="left:9px;top:12px" width="8" height="5" viewBox="0 0 8 5"><path d="M.3 .3H7.7L4 4.7Z" fill="#777"/></svg><span class="t b" style="left:19.2px;top:8px;color:#666">Bilanz</span></div></div>
<div class="row" style="left:311px;top:819px;"><span class="sw" style="height:13px;background:linear-gradient(135deg,#d1021b 0,#d1021b 50%,#63b135 50%,#63b135 100%)"></span><span class="l">Monatsverbrauch</span><span class="v">251,05 kWh</span></div>
<div class="row" style="left:311px;top:845px;"><span class="sw" style="background:#d1021b"></span><span class="l">Netzbezug</span><span class="v">225,34 kWh</span></div>
<div class="row" style="left:311px;top:871px;border-bottom:0;"><span class="sw" style="background:#63b135"></span><span class="l">Eigenversorgung</span><span class="v">25,71 kWh</span></div>
<div class="abs" style="left:311px;top:902px;width:291px;height:2px;background:#c2c2c2"></div>
<div class="row" style="left:311px;top:909px;border-bottom:0"><span class="l">Autarkiequote</span><span class="v" style="letter-spacing:.9px;right:2.2px">10 %</span></div>
<div class="row" style="left:642px;top:819px;"><span class="sw" style="height:14px;background:linear-gradient(135deg,#a0e04b 0,#a0e04b 50%,#fed84a 50%,#fed84a 100%)"></span><span class="l">Monatsertrag</span><span class="v">44,22 kWh</span></div>
<div class="row" style="left:642px;top:845px;"><span class="sw" style="background:#a0e04b"></span><span class="l">Eigenverbrauch</span><span class="v">25,71 kWh</span></div>
<div class="row" style="left:642px;top:871px;border-bottom:0;"><span class="sw" style="background:#fed84a"></span><span class="l">Netzeinspeisung</span><span class="v">18,50 kWh</span></div>
<div class="abs" style="left:642px;top:902px;width:291px;height:2px;background:#c2c2c2"></div>
<div class="row" style="left:642px;top:909px;border-bottom:0"><span class="l">Eigenverbrauchsquote</span><span class="v" style="letter-spacing:.9px;right:2.2px">58 %</span></div>
<div id="foot" class="abs">
<span style="left:9.2px;letter-spacing:-0.02px">© 2022 SMA Solar Technology AG</span>
<span style="left:186.8px;letter-spacing:0px">|</span>
<span style="left:199.8px;letter-spacing:-0.2px">Startseite</span>
<span style="left:257.2px;letter-spacing:0px">|</span>
<span style="left:270.4px;letter-spacing:0px">Information</span>
<span style="left:339.3px;letter-spacing:0px">|</span>
<span style="left:352.2px;letter-spacing:-0.2px">Bedienungsanleitungen</span>
<span style="left:476.2px;letter-spacing:0px">|</span>
<span style="left:490px;letter-spacing:0.6px">FAQ</span>
<span style="left:521.2px;letter-spacing:0px">|</span>
<span style="left:534.2px;letter-spacing:-0.15px">Nutzungsbedingungen</span>
<span style="left:654.3px;letter-spacing:0px">|</span>
<span style="left:667.6px;letter-spacing:-0.2px">Datenschutzerklärung</span>
<span style="left:784.7px;letter-spacing:0px">|</span>
<span style="left:797.8px;letter-spacing:0.02px">Impressum</span>
</div>
</body>
</html>
